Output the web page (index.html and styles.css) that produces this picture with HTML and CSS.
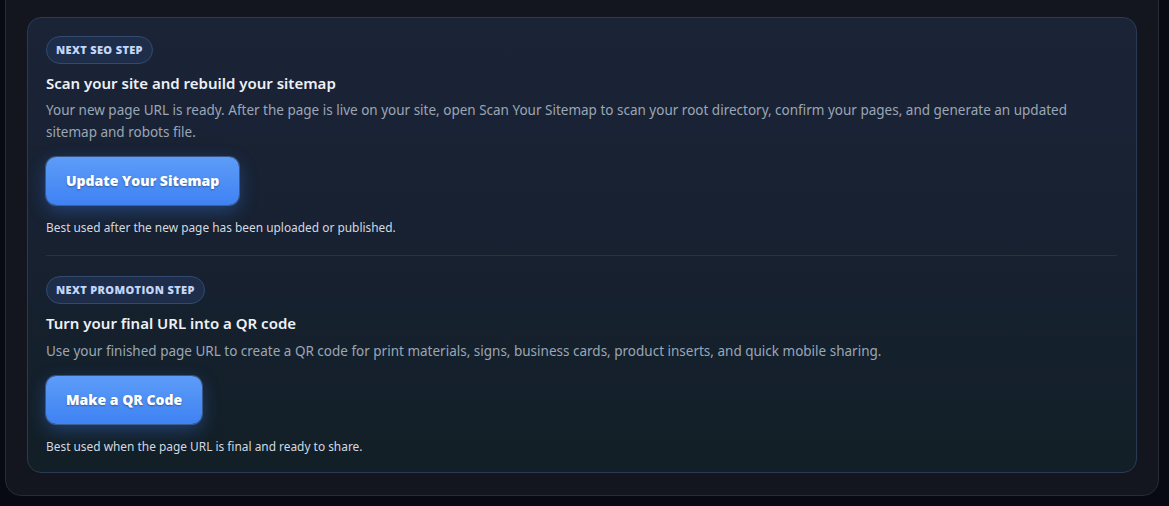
FILE: index.html
```html
<!DOCTYPE html>
<html lang="en">
<head>
    <meta charset="UTF-8">
    <meta name="viewport" content="width=device-width, initial-scale=1.0">
    <title>Next Steps</title>
    <link rel="stylesheet" href="styles.css">
</head>
<body>
    <div class="panel">
        <section class="next-card">
            <div class="step">
                <span class="badge">Next SEO Step</span>
                <h2>Scan your site and rebuild your sitemap</h2>
                <p class="desc">Your new page URL is ready. After the page is live on your site, open Scan Your Sitemap to scan your root directory, confirm your pages, and generate an updated sitemap and robots file.</p>
                <a href="#" class="action-btn">Update Your Sitemap</a>
                <p class="hint">Best used after the new page has been uploaded or published.</p>
            </div>

            <hr class="divider">

            <div class="step">
                <span class="badge">Next Promotion Step</span>
                <h2>Turn your final URL into a QR code</h2>
                <p class="desc">Use your finished page URL to create a QR code for print materials, signs, business cards, product inserts, and quick mobile sharing.</p>
                <a href="#" class="action-btn">Make a QR Code</a>
                <p class="hint">Best used when the page URL is final and ready to share.</p>
            </div>
        </section>
    </div>
</body>
</html>
```

FILE: styles.css
```css
body, html {
    margin: 0;
    padding: 0;
    background-color: #070a13;
    font-family: 'Noto Sans', 'Open Sans', sans-serif;
    color: #e6ebf3;
}

.panel {
    margin: -20px 10px 0 5px;
    padding: 36px 21px 22px 21px;
    background-color: #13161e;
    border: 1px solid #262b38;
    border-radius: 16px;
}

.next-card {
    padding: 18px 19px 17px 18px;
    border: 1px solid #2b3a55;
    border-radius: 14px;
    background: linear-gradient(180deg, #1b2437 0%, #172131 50%, #121f26 100%);
}

.step {
    display: flex;
    flex-direction: column;
    align-items: flex-start;
}

.badge {
    display: inline-block;
    height: 26px;
    line-height: 26px;
    padding: 0 9px;
    border: 1px solid #34496c;
    border-radius: 14px;
    background-color: #1e2e4a;
    color: #c3d6fb;
    font-family: 'Open Sans', sans-serif;
    font-size: 11px;
    font-weight: 800;
    text-transform: uppercase;
    letter-spacing: 0.35px;
}

h2 {
    margin: 9px 0 0 0;
    font-size: 15px;
    line-height: 20px;
    font-weight: 600;
    color: #edf1f7;
}

.desc {
    margin: 6px 0 0 0;
    font-size: 13.5px;
    line-height: 22px;
    color: #9ba6b6;
}

.step + .divider + .step .desc {
    margin-top: 7px;
}

.action-btn {
    display: inline-block;
    margin-top: 14px;
    height: 48px;
    line-height: 48px;
    padding: 0 20px;
    border-radius: 10px;
    background: linear-gradient(180deg, #5d9cf8 0%, #3f82f3 100%);
    box-shadow: 0 0 0 1px rgba(120, 170, 255, 0.35), 0 6px 18px rgba(59, 130, 246, 0.35);
    color: #ffffff;
    font-family: 'Open Sans', sans-serif;
    font-size: 14px;
    font-weight: 800;
    text-decoration: none;
    text-shadow: 0 1px 2px rgba(0, 0, 0, 0.35);
}

.hint {
    margin: 13px 0 0 0;
    font-size: 11.9px;
    line-height: 18px;
    color: #d3d9e2;
}

.divider {
    margin: 19px 0 20px 0;
    border: none;
    border-top: 1px solid #273244;
}
```
